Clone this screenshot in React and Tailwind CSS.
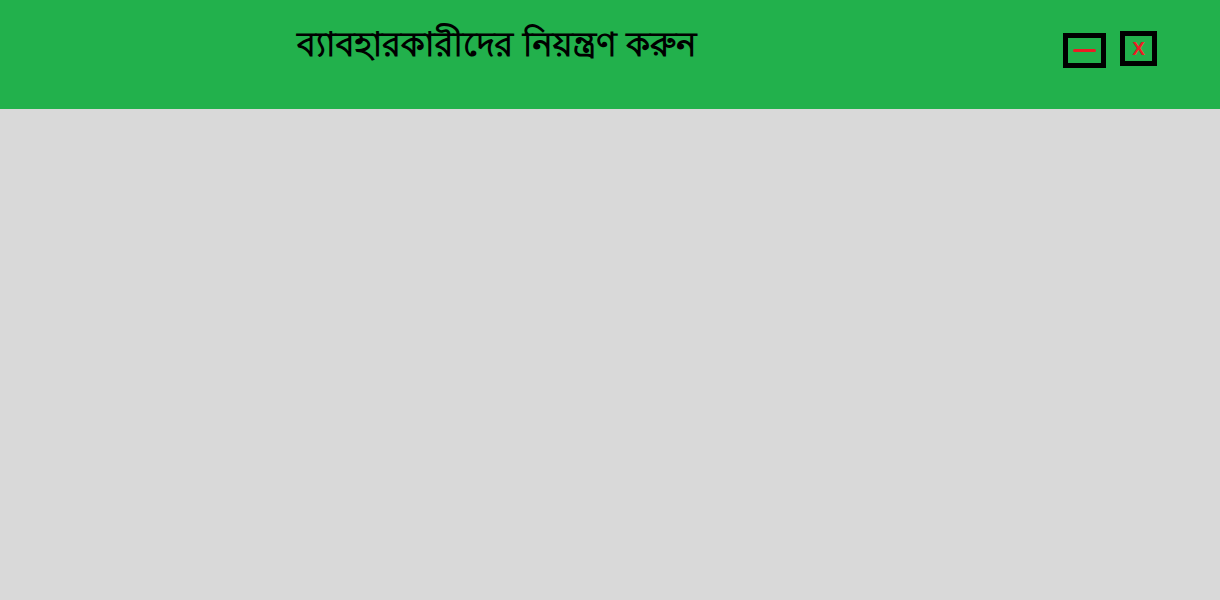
import React from 'react'

export default function App(){
  return (
    <div className="min-h-screen bg-[#d9d9d9]" style={{fontFamily:'"Lohit Bengali", "Noto Sans", sans-serif'}}>
      <header className="h-[109px] bg-[#22b14c] flex items-start">
        <h1 className="ml-[297px] mt-[22px] text-[34px] font-bold leading-[48px] text-black">ব্যাবহারকারীদের নিয়ন্ত্রণ করুন</h1>
        <div className="ml-auto mr-[63px] flex items-start gap-[14px] mt-[31px]">
          <button className="mt-[2px] w-[43px] h-[35px] border-[5px] border-black flex items-center justify-center">
            <span className="block w-[23px] h-[3px] bg-[#ed1c24] rounded-full"></span>
          </button>
          <button className="w-[37px] h-[35px] border-[5px] border-black flex items-center justify-center text-[#ed1c24] text-[19px] font-bold leading-none" style={{fontFamily:'"Liberation Sans", sans-serif'}}>X</button>
        </div>
      </header>
    </div>
  )
}
